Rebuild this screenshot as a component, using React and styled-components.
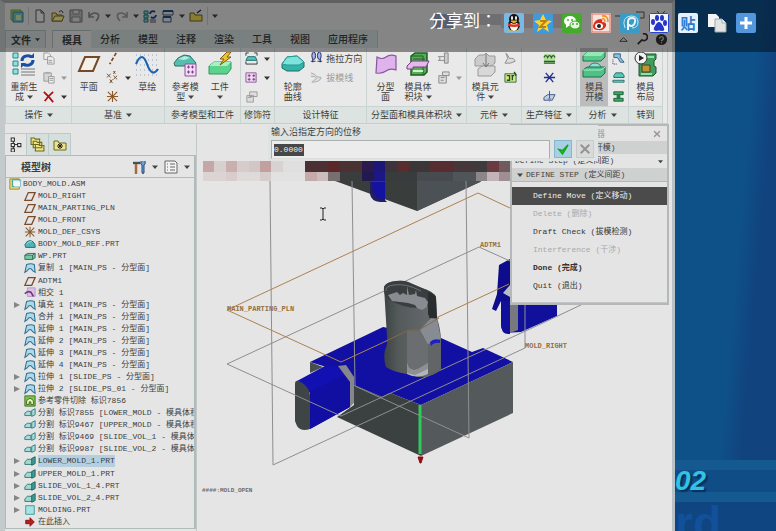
import React from 'react'
import styled, {createGlobalStyle, css} from 'styled-components'

const ui = '"Noto Sans CJK SC", sans-serif'
const mono = '"Liberation Mono", "Noto Sans CJK SC", monospace'

const GlobalStyle = createGlobalStyle`
    * { box-sizing: border-box; }
    body { margin: 0; background: #0f4f87; }
    button, input, select { font: inherit; color: inherit; border: 0; padding: 0; margin: 0; background: none; }
    ul { list-style: none; margin: 0; padding: 0; }
`

const Screen = styled.div`
    position: relative;
    display: flex;
    height: 100vh;
    min-height: 531px;
    overflow: hidden;
    font: 9px/10px ${ui};
    color: #3c3e3e;
`
const Window = styled.div`
    flex: 1;
    min-width: 0;
    display: flex;
    flex-direction: column;
    background: #e5e5e5;
    border: solid #b9c3c5;
    border-width: 3px 3px 0 5px;
    border-top-color: #a4a6a6;
    border-left-color: #c3cac9;
`
const Art = styled.svg`
    display: block;
    flex: none;
`

/* ---------- icons ---------- */

const Arrow = ({size = 6, fill = '#444'}) => (
    <Art width={size} height={size} viewBox="0 0 6 6"><path d="M0 1.5h6L3 5z" fill={fill} /></Art>
)

const sheetPath = <path d="M3 1h5l3 3v9H3z M8 1v3h3" fill="#f0f0f0" stroke="#555" />

const small = {
    app: <><path d="M1 1h10v10H1z" fill="#b9dc4e" stroke="#6fa050" /><path d="M3 3h10v10H3z" fill="#6fc0c8" stroke="#3a7f9a" /><path d="M6 6h5v5H6z" fill="#cde9a0" /></>,
    sheet: sheetPath,
    open: <><path d="M1 12V4h4l1 2h5v6z" fill="#f2e27a" stroke="#77691d" /><path d="M1 12l3-5h9l-2 5z" fill="#f7ee9e" stroke="#77691d" /><path d="M8 3q3-3 4 1" fill="none" stroke="#333" /></>,
    save: <><path d="M1 1h12v12H1z" fill="#bbb" stroke="#777" /><path d="M4 1h6v4H4zM3 8h8v5H3z" fill="#ddd" stroke="#888" /></>,
    undo: <path d="M2 3v5h5M2 8q4-6 9-3 2 3-2 7" fill="none" stroke="#888" strokeWidth="1.6" />,
    redo: <path d="M12 3v5H7M12 8Q8 2 3 5q-2 3 2 7" fill="none" stroke="#999" strokeWidth="1.6" />,
    regen: <><path d="M1 2h4v3H1zM1 6h4v3H1zM1 10h4v3H1z" fill="#7fd9cf" stroke="#24777a" /><path d="M7 5a3 3 0 015-2M13 6a3 3 0 01-5 2" fill="none" stroke="#16418f" strokeWidth="1.8" /><path d="M7 11h6M7 13h6" stroke="#555" /></>,
    windows: <><path d="M2 2h10v4H2zM2 8h8v5H2z" fill="#d6e4ee" stroke="#456" /><path d="M2 2h10M2 8h8" stroke="#234d7a" strokeWidth="2" /></>,
    close: <><path d="M1 12V4h4l1 2h7v6z" fill="#e9d956" stroke="#6d611c" /><path d="M8 4l4-3" stroke="#333" strokeWidth="1.5" /></>,
    copy: <><path d="M2 1h5l2 2v5H2z" fill="#eee" stroke="#999" /><path d="M6 5h5l2 2v6H6zM7 9h4M7 11h4" fill="#eee" stroke="#999" /></>,
    paste: <><path d="M2 2h8v9H2z" fill="#d5d5d5" stroke="#999" /><path d="M4 1h4v2H4z" fill="#aaa" /><path d="M7 6h6v7H7zM8 8h4M8 10h4" fill="#eee" stroke="#999" /></>,
    cross: <path d="M2 2l5 5 5 6M12 2Q6 7 3 12" fill="none" stroke="#b01515" strokeWidth="2" />,
    axis: <path d="M11 1L4 13" stroke="#7a4a23" strokeWidth="1.8" strokeDasharray="4 2" />,
    points: <path d="M1 3l4 4m0-4L1 7M8 5l4 4m0-4L8 9M4 9l3 4m0-4l-3 4M8 0l2 3m0-3L8 3" stroke="#6b4a2a" />,
    csys: <path d="M7 1v12M1 7h12M2 2l10 10M12 2L2 12" stroke="#8a5a2b" strokeWidth="1.2" />,
    shrink: <><path d="M3 5h8l2 4H1z" fill="#4fc3b8" stroke="#1d6d6c" /><path d="M1 1h3M1 1v3M13 1h-3M13 1v3M1 13h12M1 10v3M13 10v3" stroke="#333" fill="none" /></>,
    pattern: <><path d="M1 2h11v10H1z" fill="#efd6f2" stroke="#8d5a96" /><path d="M3 5h3M4.500 3.500v3M8 5h3M9.500 3.500v3M3 9h3M4.500 7.500v3M8 9h3M9.500 7.500v3" stroke="#7b3f88" /></>,
    card: <path d="M5 2h8v5H5zM2 6h7v7H2zM3 8h4" fill="#ddd" stroke="#999" />,
    drag: <><path d="M3 2v9M11 2v9" stroke="#222b66" strokeWidth="1.2" /><ellipse cx="4" cy="4" rx="2" ry="4" fill="#a9b4e8" stroke="#222b66" /><ellipse cx="10" cy="4" rx="2" ry="4" fill="#a9b4e8" stroke="#222b66" /><path d="M1 10h5M8 10h5" stroke="#222b66" /></>,
    draft: <path d="M1 2q5 1 6 4l5 1q-1 5-10 5l5-4Q6 5 1 6" fill="#ddd" stroke="#aaa" />,
    shutoff: <path d="M8 1h4v11H8zM1 5h7M1 9h7M3 5v4" fill="#ccc" stroke="#888" />,
    edit: <path d="M2 5h8v8H2zM6 1h7v4H6zM4 7h4M4 10h3" fill="#ddd" stroke="#888" />,
    eject: <path d="M2 1l2 6-3 5q6 1 11-2-1-4-6-3L3 2" fill="#ddd" stroke="#888" />,
    tray: <><path d="M1 3h12v9H1z" fill="#dbe87c" stroke="#2d6b43" /><path d="M3 5h3v5H3M8 5h3M9 5v5M11 1l2 4" stroke="#1b4f38" fill="none" strokeWidth="1.5" /></>,
    wave: <><path d="M1 2h12v10H1z" fill="#b2dd9c" /><path d="M1 6q2-4 4 0 2-4 4 0 2-4 4 0M1 10h12M1 12h12" fill="none" stroke="#2a5c2c" strokeWidth="1.4" /></>,
    runner: <path d="M1 7h12M3 2l4 5-4 5M11 2L7 7l4 5" fill="none" stroke="#23308b" strokeWidth="1.4" />,
    sprue: <><path d="M7 1v8M1 8l4-3h8l-3 6H1z" fill="#c3cfe4" stroke="#3f5484" /><path d="M5 9l2 4 2-4" fill="#6f86b8" /></>,
    draftCheck: <><path d="M2 2h7v4l4 5H9L6 6H2z" fill="#8fc3dc" stroke="#2d5d82" /><path d="M1 8v5h5" stroke="#333" fill="none" strokeDasharray="1 1" /></>,
    mold: <><path d="M2 5l2-3h7l2 3v2H2z" fill="#58c7b9" stroke="#1e6e66" /><path d="M1 10h12v2H1z" fill="#8bdccf" stroke="#1e6e66" /></>,
    press: <><path d="M2 2h10v3H2zM2 9h10v3H2z" fill="#3fae6a" stroke="#175c34" /><path d="M5 5h4v4H5z" fill="#1f7f48" /></>,
    tree: <path d="M3 1h3v3H3zM3 6h3v3H3zM3 11h3v3H3zM9 6h3v3H9zM5 4v2M5 9v2M6 7h3" fill="#eee" stroke="#333" />,
    folders: <path d="M1 7V1h3l1 1h4v5zM3 10V4h3l1 1h4v5zM5 13V7h3l1 1h4v5z" fill="#ede489" stroke="#6f681f" />,
    favorites: <><path d="M1 12V3h4l1 2h7v7z" fill="#ede489" stroke="#6f681f" /><path d="M7 5v6M4 8h6M5 6l4 4M9 6l-4 4" stroke="#222" /></>,
    tools: <><path d="M1 3h7M4 3v11" stroke="#a66a3c" strokeWidth="2.500" /><path d="M1 3h7" stroke="#3e5560" strokeWidth="2" /><path d="M9 1q-1 4 1 4v8q1 1 2 0V5q2-1 1-4" fill="#6aa0d8" stroke="#2f4b74" /></>,
    list: <path d="M1 1h10l2 2v10H1zM3 4h1M6 4h5M3 7h1M6 7h5M3 10h1M6 10h5" fill="#f3f3f3" stroke="#666" />,
    asm: <><path d="M1 1h11v12H1z" fill="#e7d967" stroke="#958a2c" /><path d="M4 2h9v8H4z" fill="#c7eef0" stroke="#3a8e9c" /><path d="M6 4h7v6H6z" fill="#eefafa" /></>,
    plane: <path d="M5 3h8L9 12H1z" fill="none" stroke="#7a4a2b" strokeWidth="1.5" />,
    part: <><path d="M1 8q2-5 6-5t6 5v3H2z" fill="#4fb3b8" stroke="#1f6369" /><path d="M3 7q2-3 6-3" stroke="#b6ecec" fill="none" /></>,
    wp: <path d="M1 6l3-2h9v5l-3 2H1zM1 6h9l3-2M10 6v5" fill="#77c9a3" stroke="#226648" />,
    surf: <path d="M1 12l2-9q5-2 9 0l1 9-3-2q-3-5-6 0z" fill="#abd8ea" stroke="#2f6f8f" strokeWidth="1.2" />,
    cut: <><path d="M1 1h12v12H1z" fill="#7cc24e" stroke="#3b6d1e" /><path d="M3 11V7q4-6 8 0v4H8V8H6v3z" fill="#eef6c8" stroke="#356019" /></>,
    cross2: <><path d="M4 1h9v10H4z" fill="#dcc0e6" stroke="#b590c4" /><path d="M1 8q3-4 7-2l3 5" fill="none" stroke="#6b3a80" strokeWidth="2" /></>,
    split: <><path d="M1 7l3-2h4v5H1z" fill="#a8dcd9" stroke="#2b7479" /><path d="M9 4l4-2v7l-4 2z" fill="#a8dcd9" stroke="#2b7479" /></>,
    vol: <><path d="M1 8l3-3h6v6H1z" fill="#9fd9cf" stroke="#28716c" /><path d="M9 4l4-2v8l-4 2z" fill="#3e9c96" stroke="#205a58" /></>,
    molding: <path d="M2 2h10v10H2z" fill="#a5e4e4" stroke="#3b8d93" />,
    insert: <path d="M2 5h5V2l5 5-5 5V9H2z" fill="#b81f1f" stroke="#7c1010" />,
    find: <path d="M8 1a4 4 0 11-1 7L2 13" fill="none" stroke="#333" strokeWidth="2" />,
    help: <><circle cx="7" cy="7" r="6" fill="#333" /><path d="M5 6q0-2 2-2t2 2-2 2v1M7 10v1" fill="none" stroke="#ddd" strokeWidth="1.2" /></>,
    caret: <path d="M3 9l4-4 4 4z" fill="none" stroke="#444" />,
    ok: <path d="M2 7l4 5 6-10-6 6z" fill="#1fc22b" stroke="#16a521" strokeWidth="1.5" />,
    cancel: <path d="M2 2l10 10M12 2L2 12" stroke="#989494" strokeWidth="2.500" />,
}
const Small = ({name, size = 13}) => <Art width={size} height={size} viewBox="0 0 14 14">{small[name]}</Art>

const big = {
    regen: <><path d="M1 1h5v5H1zM1 9h5v5H1zM1 17h5v5H1z" fill="#8fe3da" stroke="#2b8588" /><path d="M10 9a6 5 0 0110-4M21 8a6 5 0 01-10 4" fill="none" stroke="#1c4fa3" strokeWidth="3" /><path d="M17 6h5V1zM14 11h-5v5z" fill="#1c4fa3" /><path d="M9 17h14M9 20h14M9 23h14" stroke="#777" /></>,
    plane: <path d="M8 5h14l-6 14H2z" fill="#f3efe9" stroke="#75482a" strokeWidth="2" />,
    sketch: <><path d="M1 3h22M1 8h22M1 13h22M1 18h22M1 23h22" stroke="#8aa4bb" strokeDasharray="1 3" /><path d="M1 12q6-14 11 0t11 5" fill="none" stroke="#1b62b5" strokeWidth="2.200" /></>,
    refModel: <><path d="M1 11l4-5 6-3 6 1 6 7-2 3H2z" fill="#55bfae" stroke="#25736b" /><path d="M5 7l7-3 5 2-6 2z" fill="#b5ebe1" /><path d="M12 12h11v12H12z" fill="#f2dbf3" stroke="#8e4f9c" /><path d="M14 15h3M15.500 13.500v3M18 15h3M19.500 13.500v3M14 20h3M15.500 18.500v3M18 20h3M19.500 18.500v3" stroke="#7b3f88" /></>,
    workpiece: <><path d="M1 14l5-4h17v7l-4 5H1z" fill="#5bd38d" stroke="#2f9a5c" /><path d="M1 14h18l4-4H6z" fill="#a7f0c4" /><path d="M19 0l-7 7h4l-4 6 11-8h-4l4-5z" fill="#eec42b" stroke="#7e5b0e" /></>,
    silhouette: <><path d="M1 12l5-7 10-1 7 6v5l-5 4H6l-5-3z" fill="#35b3a9" stroke="#1c6d6b" /><path d="M1 12l5-7 10-1 7 6-5 3H6z" fill="#7ee3da" stroke="#279a94" /></>,
    parting: <path d="M3 5q5 3 9 0t10-1v14q-6-2-10 1t-10 2z" fill="#dfb3ec" stroke="#8a55a0" strokeWidth="1.200" />,
    volume: <><path d="M5 4l4-3h12v19l-3 3H5z" fill="#57ad57" stroke="#1e5e24" strokeWidth="1.500" /><path d="M5 4h12v19M7 7h12" stroke="#1e5e24" fill="none" /><path d="M1 14l5-5h17l-3 6H7v2H1z" fill="#e5b8ea" stroke="#763f85" /><path d="M7 19h10" stroke="#c9f0c6" strokeWidth="2" /></>,
    component: <><path d="M2 7l4-4h5l2-2 3 3h6v7l-4 3H2z" fill="#ccc" stroke="#999" /><path d="M5 17l4-3h13v6l-4 4H5z" fill="#d8d8d8" stroke="#999" /><path d="M13 2v12M10 11l3 4 3-4" stroke="#777" fill="none" /></>,
    opening: <><path d="M1 4l4-4h18v5l-4 4H1z" fill="#58c98a" stroke="#1f7046" /><path d="M1 4h18l4-4H5z" fill="#95e6b8" /><path d="M7 16q1-5 6-5t6 5z" fill="#8fe0da" stroke="#277a7c" /><path d="M1 18l4-3h18v6l-4 4H1z" fill="#4fc088" stroke="#1f7046" /><path d="M1 18h18l4-3" stroke="#a8efc8" fill="none" /></>,
    layout: <><path d="M5 5l3-3h14v5l-2 2v5l2 1v6l-3 3H5z" fill="#3f9d5e" stroke="#1c5631" /><path d="M8 13h8v7H8z" fill="#c0923c" stroke="#543c12" /><path d="M7 5h13M7 22h11" stroke="#8de2a6" strokeWidth="2" /><circle cx="7" cy="6" r="6" fill="#f2f2f2" stroke="#333" /><path d="M5 3l5 3-5 3z" fill="#222" /></>,
}
const Big = ({name}) => <Art width="24" height="26" viewBox="0 0 24 26">{big[name]}</Art>

/* ---------- top of the window ---------- */

const QuickBar = styled.div`
    display: flex;
    align-items: center;
    gap: 4px;
    height: 25px;
    padding-left: 5px;
    & > svg:last-child { margin-left: auto; }
`
const IconButton = styled.button`
    display: flex;
    align-items: center;
    justify-content: center;
    width: ${p => p.$w || 14}px;
    height: 18px;
`
const Divider = styled.i`
    width: 1px;
    height: 18px;
    background: #c2c6c6;
`
const TabBar = styled.nav`
    display: flex;
    height: 20px;
    padding-top: 2px;
`
const Tab = styled.button`
    height: 18px;
    padding: 0 9px;
    font-size: 10px;
    font-weight: ${p => p.$on || p.$file ? 700 : 500};
    background: ${p => p.$on ? '#e9e9e9' : '#d3dcdb'};
    border-right: 1px solid #bcc7c6;
    margin-right: -1px;
    ${p => p.$on && css`
        border: solid #b2bfbe;
        border-width: 1px 1px 0;
    `}
    ${p => p.$file && css`
        display: flex;
        align-items: center;
        gap: 4px;
        padding: 0 5px;
        border: solid #b2bfbe;
        border-width: 1px 1px 0;
        margin-right: 6px;
    `}
`
const TabTools = styled.div`
    display: flex;
    gap: 5px;
    margin-left: auto;
    padding-right: 4px;
`

const Ribbon = styled.div`
    display: flex;
    height: 76px;
    flex: none;
    margin-right: 4px;
    background: #e9e9e9;
    border: solid #c3cfcd;
    border-width: 0 1px 1px;
`
const GroupBox = styled.section`
    display: flex;
    flex-direction: column;
    width: ${p => p.$w}px;
    flex: none;
    border-right: 1px solid #c9d4d2;
`
const GroupBody = styled.div`
    flex: 1;
    display: flex;
    justify-content: space-evenly;
`
const GroupLabel = styled.div`
    display: flex;
    align-items: center;
    justify-content: center;
    gap: 4px;
    height: 17px;
    background: #dce3e1;
    border-top: 1px solid #c9d4d2;
    white-space: nowrap;
`
const BigButton = styled.button`
    display: flex;
    flex-direction: column;
    align-items: center;
    min-width: 28px;
    padding-top: 4px;
    background: ${p => p.$on ? '#bcbcbc' : 'none'};
    & > svg { margin-bottom: 4px; }
`
const LabelLine = styled.span`
    display: flex;
    align-items: center;
    gap: 3px;
    height: 10px;
    white-space: nowrap;
`
const SmallColumn = styled.div`
    padding-top: 1px;
`
const SmallButton = styled.button`
    display: flex;
    align-items: center;
    gap: ${p => p.$text ? 3 : 6}px;
    height: 19px;
    white-space: nowrap;
    color: ${p => p.disabled ? '#9b9b9b' : 'inherit'};
`

const Tool = ({icon, lines, drop, on}) => (
    <BigButton $on={on}>
        <Big name={icon} />
        {lines.map((line, i) => (
            <LabelLine key={line}>{line}{drop && i === lines.length - 1 && <Arrow />}</LabelLine>
        ))}
    </BigButton>
)
const Minor = ({icon, text, drop, off}) => (
    <SmallButton $text={text} disabled={off} aria-label={text || icon}>
        <Small name={icon} />
        {text}
        {drop && <Arrow fill={off ? '#999' : '#333'} />}
    </SmallButton>
)
const Group = ({label, w, drop, children}) => (
    <GroupBox $w={w}>
        <GroupBody>{children}</GroupBody>
        <GroupLabel>{label}{drop && <Arrow />}</GroupLabel>
    </GroupBox>
)

const TopRibbon = () => (
    <Ribbon>
        <Group label="操作" w={66} drop>
            <Tool icon="regen" lines={['重新生', '成']} drop />
            <SmallColumn>
                <Minor icon="copy" off />
                <Minor icon="paste" off drop />
                <Minor icon="cross" drop />
            </SmallColumn>
        </Group>
        <Group label="基准" w={93} drop>
            <Tool icon="plane" lines={['平面']} />
            <SmallColumn>
                <Minor icon="axis" />
                <Minor icon="points" drop />
                <Minor icon="csys" />
            </SmallColumn>
            <Tool icon="sketch" lines={['草绘']} />
        </Group>
        <Group label="参考模型和工件" w={76}>
            <Tool icon="refModel" lines={['参考模', '型']} drop />
            <BigButton>
                <Big name="workpiece" />
                <LabelLine>工件</LabelLine>
                <LabelLine><Arrow /></LabelLine>
            </BigButton>
        </Group>
        <Group label="修饰符" w={34}>
            <SmallColumn>
                <Minor icon="shrink" drop />
                <Minor icon="pattern" drop />
                <Minor icon="card" off />
            </SmallColumn>
        </Group>
        <Group label="设计特征" w={92}>
            <Tool icon="silhouette" lines={['轮廓', '曲线']} />
            <SmallColumn>
                <Minor icon="drag" text="拖拉方向" />
                <Minor icon="draft" text="拔模线" off />
            </SmallColumn>
        </Group>
        <Group label="分型面和模具体积块" w={100} drop>
            <Tool icon="parting" lines={['分型', '面']} />
            <Tool icon="volume" lines={['模具体', '积块']} drop />
            <SmallColumn>
                <Minor icon="shutoff" off />
                <Minor icon="edit" off drop />
            </SmallColumn>
        </Group>
        <Group label="元件" w={55} drop>
            <Tool icon="component" lines={['模具元', '件']} drop />
            <SmallColumn>
                <Minor icon="eject" off />
                <Minor icon="tray" />
            </SmallColumn>
        </Group>
        <Group label="生产特征" w={55} drop>
            <SmallColumn>
                <Minor icon="wave" />
                <Minor icon="runner" />
                <Minor icon="sprue" />
            </SmallColumn>
        </Group>
        <Group label="分析" w={52} drop>
            <Tool icon="opening" lines={['模具', '开模']} on />
            <SmallColumn>
                <Minor icon="draftCheck" />
                <Minor icon="mold" />
                <Minor icon="press" />
            </SmallColumn>
        </Group>
        <Group label="转到" w={34}>
            <Tool icon="layout" lines={['模具', '布局']} />
        </Group>
    </Ribbon>
)

/* ---------- model tree ---------- */

const Workspace = styled.div`
    position: relative;
    flex: 1;
    min-height: 0;
    display: flex;
`
const Sidebar = styled.aside`
    display: flex;
    flex-direction: column;
    width: 191px;
    flex: none;
    padding: 9px 0 2px;
`
const SideTabs = styled.div`
    display: flex;
    height: 22px;
    flex: none;
`
const SideTab = styled.button`
    display: flex;
    align-items: center;
    justify-content: center;
    width: 22px;
    border: solid #bccac8;
    border-width: 1px 1px 0 0;
    background: ${p => p.$on ? '#e5e5e5' : '#d5dfdd'};
`
const Panel = styled.div`
    flex: 1;
    min-height: 0;
    display: flex;
    flex-direction: column;
    border: 1px solid #aebcba;
    border-right-width: 2px;
`
const PanelTitle = styled.div`
    display: flex;
    align-items: center;
    gap: 6px;
    height: 22px;
    flex: none;
    padding: 0 4px 0 15px;
    border-bottom: 1px solid #aebcba;
    & > b { flex: 1; font-size: 10px; }
`
const Tree = styled.ul`
    flex: 1;
    display: flex;
    flex-direction: column;
    font: 8px/12px ${mono};
    overflow: hidden;
`
const TreeRow = styled.li`
    flex: 1;
    display: flex;
    align-items: center;
    gap: 2px;
    padding-left: ${p => p.$root ? 3 : 8}px;
    white-space: pre;
`
const Expander = styled.span`
    width: 8px;
    flex: none;
`
const RowText = styled.span`
    background: ${p => p.$on ? '#b3cfe0' : 'none'};
`

const rows = [
    ['asm', 'BODY_MOLD.ASM'],
    ['plane', 'MOLD_RIGHT'],
    ['plane', 'MAIN_PARTING_PLN'],
    ['plane', 'MOLD_FRONT'],
    ['csys', 'MOLD_DEF_CSYS'],
    ['part', 'BODY_MOLD_REF.PRT'],
    ['wp', 'WP.PRT'],
    ['surf', '复制 1 [MAIN_PS - 分型面]'],
    ['plane', 'ADTM1'],
    ['cross2', '相交 1'],
    ['surf', '填充 1 [MAIN_PS - 分型面]', true],
    ['surf', '合并 1 [MAIN_PS - 分型面]'],
    ['surf', '延伸 1 [MAIN_PS - 分型面]'],
    ['surf', '延伸 2 [MAIN_PS - 分型面]'],
    ['surf', '延伸 3 [MAIN_PS - 分型面]'],
    ['surf', '延伸 4 [MAIN_PS - 分型面]'],
    ['surf', '拉伸 1 [SLIDE_PS - 分型面]', true],
    ['surf', '拉伸 2 [SLIDE_PS_01 - 分型面]', true],
    ['cut', '参考零件切除 标识7856'],
    ['split', '分割 标识7855 [LOWER_MOLD - 模具体积块]'],
    ['split', '分割 标识9467 [UPPER_MOLD - 模具体积块]'],
    ['split', '分割 标识9469 [SLIDE_VOL_1 - 模具体积块]'],
    ['split', '分割 标识9987 [SLIDE_VOL_2 - 模具体积块]'],
    ['vol', 'LOWER_MOLD_1.PRT', true],
    ['vol', 'UPPER_MOLD_1.PRT', true],
    ['vol', 'SLIDE_VOL_1_4.PRT', true],
    ['vol', 'SLIDE_VOL_2_4.PRT', true],
    ['molding', 'MOLDING.PRT', true],
    ['insert', '在此插入'],
]

const ModelTree = () => (
    <Sidebar>
        <SideTabs>
            <SideTab $on aria-label="tree"><Small name="tree" size={15} /></SideTab>
            <SideTab aria-label="folders"><Small name="folders" size={15} /></SideTab>
            <SideTab aria-label="favorites"><Small name="favorites" size={14} /></SideTab>
        </SideTabs>
        <Panel>
            <PanelTitle>
                <b>模型树</b>
                <Small name="tools" size={14} /><Arrow />
                <Small name="list" size={14} /><Arrow />
            </PanelTitle>
            <Tree>
                {rows.map(([icon, text, closed], i) => (
                    <TreeRow key={text} $root={i === 0}>
                        {i > 0 && <Expander>{closed && <Art width="6" height="8" viewBox="0 0 6 8"><path d="M0 1l6 3-6 3z" fill="#858585" /></Art>}</Expander>}
                        <Small name={icon} size={12} />
                        <RowText $on={text === 'LOWER_MOLD_1.PRT'}>{text}</RowText>
                    </TreeRow>
                ))}
            </Tree>
        </Panel>
    </Sidebar>
)

/* ---------- 3D view ---------- */

const View = styled.main`
    flex: 1;
    min-width: 0;
    overflow: hidden;
    border-left: 1px solid #c2c8c8;
`
const Scene = styled.svg`
    display: block;
    width: 100%;
    height: 100%;
    font: 7px ${mono};
`

// [x, width, color]
const censorTop = [
    [203, 11, '#c6a6a6'], [214, 12, '#d8cfcf'], [226, 11, '#cbafaf'], [237, 12, '#d6cccc'], [249, 11, '#d2c6c6'],
    [260, 11, '#c3a0a0'], [271, 12, '#d9d2d2'], [283, 22, '#e0dfdf'], [305, 23, '#4a3032'], [328, 12, '#5c2729'],
    [340, 22, '#4a3233'], [362, 12, '#2c1a4a'], [374, 11, '#1c1778'], [385, 12, '#3c3438'], [397, 12, '#592c30'],
    [409, 21, '#3c3638'], [430, 24, '#562d30'], [454, 21, '#45373a'], [475, 12, '#3f3a3d'], [487, 12, '#6b3a40'], [499, 12, '#6f5a5f'],
]
const censorBottom = [
    [203, 23, '#dcd4d4'], [226, 11, '#d8cccc'], [237, 23, '#dfdada'], [260, 11, '#d5cccc'], [271, 34, '#e2e1e1'],
    [305, 12, '#c4aaaa'], [317, 11, '#cbbcbc'], [328, 12, '#77706f'], [340, 22, '#3b3d3c'], [362, 12, '#22194e'],
    [374, 11, '#1b1785'], [385, 32, '#383c3c'], [417, 36, '#474b4f'], [453, 23, '#50555a'], [476, 11, '#8b8688'], [487, 12, '#c2b4b6'], [499, 12, '#a08f92'],
]

const MoldView = () => (
    <View>
        <Scene viewBox="197 124 475 407" preserveAspectRatio="xMinYMin slice">
            <defs>
                <linearGradient id="barrel">
                    <stop offset="0" stopColor="#3d4243" />
                    <stop offset=".25" stopColor="#54595a" />
                    <stop offset=".75" stopColor="#63686a" />
                    <stop offset="1" stopColor="#54595b" />
                </linearGradient>
            </defs>

            {/* upper mold half */}
            <path d="M305 161h190l-15 21-63 29-79-29-33-11z" fill="#393e3c" />
            <path d="M417 161h93l-30 21-63 29z" fill="#4c5155" />
            <path d="M370 182h15v18l-4 1q-8-2-10-8z" fill="#1412a0" />
            <path d="M370 182v12q1 7 10 8h7l-2-2q-12 0-13-18z" fill="#202060" />

            {/* right slide */}
            <path d="M499 265l11-6v75q-9 1-9-10v-23l-5 10-4-2 5-15z" fill="#0c0c8c" />
            <path d="M501 301h56v15l-36 16-15 1q-5-2-5-9z" fill="#11109b" />
            <path d="M510 301h8v29l-8 3z" fill="#77797f" />
            <path d="M510 285v12l-7-4z" fill="#b9bdc3" />

            {/* lower mold half */}
            <path d="M310 362l73-35 58 11 31 14 11-4 30 14-92 43-31-12-8 4-28-12-31-19z" fill="#1210a2" />
            <path d="M354 385l28 12 8-4 31 12v51l-84-39 17-12z" fill="#3b4140" />
            <path d="M421 405l92-43v51l-92 43z" fill="#54595c" />
            <path d="M310 362l13 5-13 6z" fill="#484d4d" />

            {/* left slide */}
            <path d="M297 381l26-14 15-1 12 16v25l-40 22v-36z" fill="#1210b0" />
            <path d="M310 391l36-16 4 7v25l-40 22z" fill="#110fa2" />
            <path d="M338 366l8-1 8 12v26l-4 4v-25z" fill="#85878c" />
            <path d="M295 384q0-4 4-3 10 5 11 14v34q-9 3-13-3l-2-5z" fill="#3f4544" />

            {/* planes */}
            <path d="M270 181l3 284 252-117v-45M352 181l3 205 114 52-3-257M227 364l252-117 31 14M227 364l114 52 204-94 40-19" fill="none" stroke="#8e8e91" />
            <path d="M227 310l251-117 32 15M227 310l114 52 168-78" fill="none" stroke="#ad8150" />

            {/* molded part */}
            <path d="M384 287q2-5 12-6 7-1 12 1l14 6q12 4 14 9l1 21q4 12 4 24v28q-10 8-23 7l-11-3q-14-2-21-7-3-9-1-17 3-6 2-13z" fill="url(#barrel)" />
            <path d="M384 287q2-5 12-6 7-1 12 1l14 6q12 4 14 9-3 10-14 11-18 1-34-9-5-5-4-12z" fill="#3a3e41" />
            <path d="M386 291q-1-5 8-6 12-2 27 6" fill="none" stroke="#6d7174" />
            <path d="M388 295l9-3 3 3 3-2 4 2v-9l2 9 6-1 1-4 1 6 8 2 3 4-1 5-5 3-5-2-2-3-7-2-8-1-8-1z" fill="#888c91" />
            <path d="M428 292q8 3 8 6l1 20-7 1-2-5z" fill="#2a2d2e" />
            <path d="M420 330l11-12 6 1 4 20-13 6z" fill="#868c92" />
            <path d="M407 331h13l8 14v23l-18 7-3-8z" fill="#6a6e70" />
            <path d="M428 344l13-5v31l-13 5z" fill="#616568" />
            <path d="M407 363q1 7 7 7 8 0 14-7v11q-11 5-21 0z" fill="#b3b6b9" />
            <path d="M407 363q2 8 9 7l12-7v6l-13 6-8-2z" fill="#8d9093" />
            <path d="M430 342q4-4 10-2v3q-6-1-9 3z" fill="#1b20c8" />
            <path d="M386 341l23-11h10l20-12" fill="none" stroke="#86694a" />

            {/* move direction */}
            <path d="M420 405v49" stroke="#30c95c" strokeWidth="3" />
            <path d="M418 457h5l-2 6h-1z" fill="#8e1111" stroke="#8e1111" />

            {censorTop.map(([x, w, fill]) => <rect key={x} x={x} y="161" width={w} height="11" fill={fill} />)}
            {censorBottom.map(([x, w, fill]) => <rect key={x} x={x} y="172" width={w} height="9" fill={fill} />)}

            <path d="M320 208h2l1 1 1-1h2M323 209v10M320 220h2l1-1 1 1h2" fill="none" stroke="#222" />
            <g fill="#94703f" fontWeight="700">
                <text x="227" y="311">MAIN_PARTING_PLN</text>
                <text x="480" y="247">ADTM1</text>
                <text x="525" y="348">MOLD_RIGHT</text>
            </g>
            <text x="202" y="492" fontSize="6" fontWeight="700" fill="#6e6e6e">####:MOLD_OPEN</text>
        </Scene>
    </View>
)

/* ---------- prompt and menu ---------- */

const Prompt = styled.form`
    position: absolute;
    top: 1px;
    left: 263px;
    right: 74px;
    padding: 2px 4px 0 3px;
    height: 36px;
    background: #dfe4e3;
    & > label { display: block; height: 13px; }
`
const PromptRow = styled.div`
    display: flex;
    gap: 4px;
`
const Field = styled.div`
    flex: 1;
    height: 19px;
    padding: 3px 2px;
    background: #ececec;
    border: 1px solid #a9afaf;
    border-bottom-color: #ddd;
    display: flex;
    & > input {
        width: 30px;
        height: 12px;
        background: #474747;
        color: #eee;
        font: 8px/12px ${mono};
    }
`
const PromptButton = styled.button`
    display: flex;
    align-items: center;
    justify-content: center;
    width: 18px;
    height: 18px;
    background: ${p => p.$ok ? '#a9d0e2' : '#d9dbdb'};
    border: 1px solid ${p => p.$ok ? '#84b6d0' : '#c9cccc'};
`

const Manager = styled.div`
    position: absolute;
    top: 0;
    right: 3px;
    width: 159px;
    background: #e4e4e4;
    border: 2px solid #b4b8b8;
    font: 8px/12px ${mono};
    white-space: pre;
`
const ManagerTitle = styled.div`
    display: flex;
    align-items: center;
    justify-content: space-between;
    height: 15px;
    padding: 0 6px 0 48px;
    color: #9a9a9a;
    font: 9px/12px ${ui};
`
const ManagerRow = styled.div`
    display: flex;
    align-items: center;
    gap: 3px;
    height: 13px;
    padding-left: 5px;
    background: #cfd0d0;
`
const StepSelect = styled.label`
    display: flex;
    align-items: center;
    height: 14px;
    padding: 0 4px 0 3px;
    & > select {
        flex: 1;
        appearance: none;
    }
`
const Menu = styled.ul`
    padding: 5px 0 7px;
    border-top: 1px solid #b4b8b8;
    border-bottom: 1px solid #c2c5c5;
`
const MenuItem = styled.button`
    display: block;
    width: 100%;
    height: 18px;
    padding-left: 21px;
    text-align: left;
    font-weight: ${p => p.$bold ? 700 : 400};
    color: ${p => p.$on ? '#ededed' : p.disabled ? '#a9a9a9' : '#333'};
    background: ${p => p.$on ? '#4b4b4b' : 'none'};
`

const MenuManager = () => (
    <Manager>
        <ManagerTitle>菜单管理器<Small name="cancel" size={8} /></ManagerTitle>
        <ManagerRow><Arrow />MOLD OPEN (模具开模)</ManagerRow>
        <StepSelect>
            <select aria-label="step"><option>Define Step (定义间距)</option></select>
            <Arrow size={5} />
        </StepSelect>
        <ManagerRow><Arrow />DEFINE STEP (定义间距)</ManagerRow>
        <Menu>
            <li><MenuItem $on>Define Move (定义移动)</MenuItem></li>
            <li><MenuItem disabled>Delete (删除)</MenuItem></li>
            <li><MenuItem>Draft Check (拔模检测)</MenuItem></li>
            <li><MenuItem disabled>Interference (干涉)</MenuItem></li>
            <li><MenuItem $bold>Done (完成)</MenuItem></li>
            <li><MenuItem>Quit (退出)</MenuItem></li>
        </Menu>
    </Manager>
)

const OffsetPrompt = () => (
    <Prompt onSubmit={event => event.preventDefault()}>
        <label htmlFor="offset">输入沿指定方向的位移</label>
        <PromptRow>
            <Field><input id="offset" defaultValue="0.0000" /></Field>
            <PromptButton $ok aria-label="ok"><Small name="ok" /></PromptButton>
            <PromptButton type="button" aria-label="cancel"><Small name="cancel" size={12} /></PromptButton>
        </PromptRow>
    </Prompt>
)

/* ---------- desktop and share bar ---------- */

const Desktop = styled.div`
    display: flex;
    flex-direction: column;
    justify-content: flex-end;
    width: 101px;
    flex: none;
    overflow: hidden;
    background: linear-gradient(95deg, #0e5088 58%, #11437f 72%);
`
const Band = styled.div`
    height: 42px;
    border: solid #14598f;
    border-width: 10px 0;
    background: #104c86;
    color: #2fc4e4;
    font: italic 700 28px/22px "Liberation Sans", sans-serif;
    text-shadow: 2px 2px 1px #0a2f5a;
`
const Ghost = styled.div`
    height: 29px;
    color: #12509a;
    background: #0f4580;
    font: 700 46px/42px "Liberation Sans", sans-serif;
    overflow: hidden;
`

const ShareBar = styled.div`
    position: absolute;
    inset: 0 0 auto;
    display: flex;
    justify-content: flex-end;
    gap: 9px;
    height: 52px;
    padding: 13px 20px 0 0;
    background: rgba(0, 0, 0, .42);
    color: #fff;
`
const ShareLabel = styled.span`
    font: 17px/14px "Noto Sans CJK TC", sans-serif;
    margin-right: -2px;
`
const ShareLink = styled.a`
    display: block;
    width: 20px;
    height: 20px;
    border-radius: 2px;
    overflow: hidden;
    text-decoration: none;
    text-align: center;
    font: 700 15px/19px ${ui};
    color: #2a7ad1;
    background: ${p => p.$bg || 'none'};
`
const shares = [
    ['QQ', '#78b9e6', <><ellipse cx="10" cy="12" rx="6" ry="6" fill="#151515" /><ellipse cx="10" cy="13" rx="4" ry="5" fill="#fff" /><ellipse cx="10" cy="6" rx="5" ry="5" fill="#151515" /><path d="M4 10q6 3 12 0v3q-6 2-12 0z" fill="#dd3322" /><ellipse cx="8" cy="5" rx="1" ry="2" fill="#fff" /><ellipse cx="12" cy="5" rx="1" ry="2" fill="#fff" /><path d="M7 8h6l-3 2zM4 18h5M11 18h5" fill="#f4b020" stroke="#f4b020" /></>],
    ['Qzone', '#3e9ade', <><path d="M10 1l3 6 6 1-5 4 2 7-6-4-6 4 2-7-5-4 6-1z" fill="#ffd32e" /><path d="M7 8h6l-6 6h6" fill="none" stroke="#b9801c" strokeWidth="2" /></>],
    ['WeChat', '#43ac2b', <><ellipse cx="8" cy="8" rx="6" ry="5" fill="#fff" /><path d="M4 11v4l4-3z" fill="#fff" /><ellipse cx="13" cy="12" rx="5" ry="4" fill="#e7f5e3" stroke="#43ac2b" /><g fill="#43ac2b"><circle cx="6" cy="7" r="1" /><circle cx="10" cy="7" r="1" /><circle cx="11" cy="11" r="1" /><circle cx="15" cy="11" r="1" /></g></>],
    ['Weibo', '#f6e5df', <><path d="M1 1h18v18H1z" fill="none" stroke="#db6d55" /><path d="M2 13q1-6 7-7 3 0 2 3 5 0 4 4-2 5-8 4-5 0-5-4z" fill="#d8301f" /><ellipse cx="8" cy="13" rx="4" ry="3" fill="#fff" /><circle cx="8" cy="13" r="2" fill="#222" /><path d="M11 3q6-1 6 6M11 6q3-1 3 3" fill="none" stroke="#ee9222" strokeWidth="1.500" /></>],
    ['Pengyou', '#3a9bc7', <><path d="M8 17V9q0-4 4-4t3 4-4 4q-2 0-2-2" fill="none" stroke="#e9f6fb" strokeWidth="2" /><path d="M5 15Q1 4 11 3q7 0 7 6t-6 6" fill="none" stroke="#c9e7f3" /></>],
    ['Baidu', '#f4f6fd', <><path d="M.5.5h19v19H.5z" fill="none" stroke="#2a47c5" /><g fill="#2635c9"><ellipse cx="4" cy="9" rx="2" ry="3" /><ellipse cx="8" cy="5" rx="2" ry="3" /><ellipse cx="13" cy="5" rx="2" ry="3" /><ellipse cx="16" cy="10" rx="2" ry="3" /><path d="M10 9q2 0 4 4 3 5-1 5-3-1-6 0-4-1-1-5 2-4 4-4z" /></g></>],
    ['贴', '#e8f1fb', null],
    ['Copy', null, <><path d="M1 1h8l3 3v10H1z" fill="#f4f4f4" /><path d="M8 6h7l4 4v9H8z" fill="#e4e4e4" stroke="#9aa" /><path d="M15 6v4h4" fill="#fff" stroke="#9aa" /></>],
    ['More', '#5296dd', <path d="M10 4v12M4 10h12" stroke="#fff" strokeWidth="3" />],
]

const Share = () => (
    <ShareBar>
        <ShareLabel>分享到：</ShareLabel>
        {shares.map(([name, bg, art]) => (
            <ShareLink key={name} href="#" aria-label={name} $bg={bg}>
                {art ? <Art width="20" height="20" viewBox="0 0 20 20">{art}</Art> : name}
            </ShareLink>
        ))}
    </ShareBar>
)

// censored document title and the window buttons
const TitleBlocks = () => (
    <Art width="238" height="25" viewBox="0 0 238 25">
        <path d="M0 11h19v22H0z" fill="#97a2c4" />
        <path d="M19 11h48v11H19z" fill="#cdcdd2" />
        <path d="M40 11h27v11H40z" fill="#c0c0c4" />
        <path d="M67 11h66v14H67z" fill="#d8c4c6" />
        <path d="M181 13h8M202 9h8v6h-6M223 8l8 8M231 8l-8 8" stroke="#555" fill="none" />
    </Art>
)

const quick = ['app', '|', 'sheet', 'open', 'save', 'undo', 'v', 'redo', 'v', 'regen', 'windows', 'v', 'close', '|', 'v']
const tabs = ['模具', '分析', '模型', '注释', '渲染', '工具', '视图', '应用程序']

const App = () => (
    <Screen>
        <GlobalStyle />
        <Window>
            <QuickBar>
                {quick.map((name, i) => (
                    name === '|' ? <Divider key={i} /> :
                    name === 'v' ? <IconButton key={i} $w={6} aria-label="more"><Arrow /></IconButton>
                                 : <IconButton key={i} aria-label={name}><Small name={name} size={14} /></IconButton>
                ))}
                <TitleBlocks />
            </QuickBar>
            <TabBar>
                <Tab $file>文件<Arrow size={5} /></Tab>
                {tabs.map((name, i) => <Tab key={name} $on={i === 0}>{name}</Tab>)}
                <TabTools>
                    <IconButton aria-label="collapse"><Small name="caret" /></IconButton>
                    <IconButton aria-label="search"><Small name="find" size={12} /></IconButton>
                    <IconButton aria-label="help"><Small name="help" /></IconButton>
                </TabTools>
            </TabBar>
            <TopRibbon />
            <Workspace>
                <ModelTree />
                <MoldView />
                <MenuManager />
                <OffsetPrompt />
            </Workspace>
        </Window>
        <Desktop>
            <Band>02</Band>
            <Ghost>rd</Ghost>
        </Desktop>
        <Share />
    </Screen>
)

export default App
